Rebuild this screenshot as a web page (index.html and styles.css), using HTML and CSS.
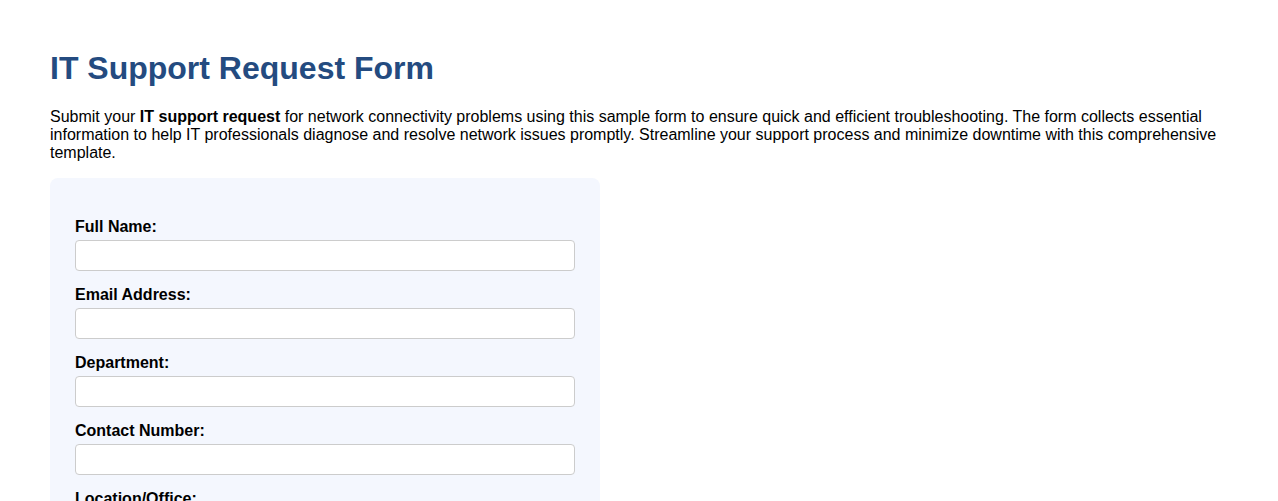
FILE: index.html
```html
<!DOCTYPE html>
<html lang="en">
<head>
    <meta charset="UTF-8">
    <meta name="viewport" content="width=device-width, initial-scale=1.0">
    <title>IT Support Request Form</title>
    <link rel="stylesheet" href="styles.css">
</head>
<body>
    <div class="page">
        <h1>IT Support Request Form</h1>
        <p class="intro">Submit your <strong>IT support request</strong> for network connectivity problems using this sample form to ensure quick and efficient troubleshooting. The form collects essential information to help IT professionals diagnose and resolve network issues promptly. Streamline your support process and minimize downtime with this comprehensive template.</p>

        <!-- Formulario de solicitud -->
        <div class="form-box">
            <form id="support-form" action="#" method="post">
                <label for="full-name">Full Name:</label>
                <input type="text" id="full-name" name="full-name">

                <label for="email">Email Address:</label>
                <input type="email" id="email" name="email">

                <label for="department">Department:</label>
                <input type="text" id="department" name="department">

                <label for="contact">Contact Number:</label>
                <input type="tel" id="contact" name="contact">

                <label for="location">Location/Office:</label>
                <input type="text" id="location" name="location">
            </form>
        </div>
    </div>
</body>
</html>
```

FILE: styles.css
```css
body {
    margin: 0;
    font-family: 'Liberation Sans', Arial, sans-serif;
    color: #000;
    background: #fff;
}
.page {
    padding: 29px 50px;
}
h1 {
    font-size: 32px;
    font-weight: 700;
    color: #244b80;
    margin: 21px 0;
}
.intro {
    font-size: 16px;
    margin: 16px 0;
}
.form-box {
    width: 550px;
    box-sizing: border-box;
    background-color: #f4f7fe;
    border-radius: 8px;
    padding: 40px 25px 25px;
}
.form-box label {
    display: block;
    font-size: 16px;
    font-weight: 700;
    margin-bottom: 4px;
}
.form-box input {
    display: block;
    width: 100%;
    height: 31px;
    box-sizing: border-box;
    padding: 6px 8px;
    margin-bottom: 15px;
    border: 1px solid #ccc;
    border-radius: 4px;
    background: #fff;
    font-family: inherit;
    font-size: 14px;
}
```
